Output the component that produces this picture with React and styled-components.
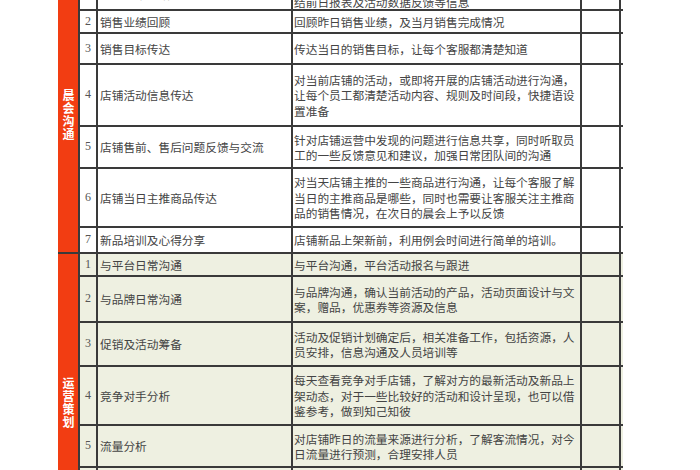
import styled, { createGlobalStyle } from "styled-components";

const GlobalStyle = createGlobalStyle`
  html, body {
    margin: 0;
    padding: 0;
    background: #ffffff;
    overflow: hidden;
  }
`;

const sections = [
  {
    title: "晨会沟通",
    tint: "#ffffff",
    rows: [
      { h: 33, item: "前日数据总结", desc: ["每日晨会由客服主管汇报，总", "结前日报表及活动数据反馈等信息"] },
      { h: 23, item: "销售业绩回顾", desc: ["回顾昨日销售业绩，及当月销售完成情况"] },
      { h: 31, item: "销售目标传达", desc: ["传达当日的销售目标，让每个客服都清楚知道"] },
      {
        h: 62,
        item: "店铺活动信息传达",
        desc: [
          "对当前店铺的活动，或即将开展的店铺活动进行沟通，",
          "让每个员工都清楚活动内容、规则及时间段，快捷语设",
          "置准备",
        ],
      },
      {
        h: 42,
        item: "店铺售前、售后问题反馈与交流",
        desc: [
          "针对店铺运营中发现的问题进行信息共享，同时听取员",
          "工的一些反馈意见和建议，加强日常团队间的沟通",
        ],
      },
      {
        h: 59,
        item: "店铺当日主推商品传达",
        desc: [
          "对当天店铺主推的一些商品进行沟通，让每个客服了解",
          "当日的主推商品是哪些，同时也需要让客服关注主推商",
          "品的销售情况，在次日的晨会上予以反馈",
        ],
      },
      { h: 26, item: "新品培训及心得分享", desc: ["店铺新品上架新前，利用例会时间进行简单的培训。"] },
    ],
  },
  {
    title: "运营策划",
    tint: "#eef0e1",
    rows: [
      { h: 23, item: "与平台日常沟通", desc: ["与平台沟通，平台活动报名与跟进"] },
      {
        h: 46,
        item: "与品牌日常沟通",
        desc: ["与品牌沟通，确认当前活动的产品，活动页面设计与文", "案，赠品，优惠券等资源及信息"],
      },
      {
        h: 44,
        item: "促销及活动筹备",
        desc: ["活动及促销计划确定后，相关准备工作，包括资源，人", "员安排，信息沟通及人员培训等"],
      },
      {
        h: 59,
        item: "竞争对手分析",
        desc: [
          "每天查看竞争对手店铺，了解对方的最新活动及新品上",
          "架动态，对于一些比较好的活动和设计呈现，也可以借",
          "鉴参考，做到知己知彼",
        ],
      },
      {
        h: 42,
        item: "流量分析",
        desc: ["对店铺昨日的流量来源进行分析，了解客流情况，对今", "日流量进行预测，合理安排人员"],
      },
      {
        h: 43,
        item: "数据报表整理",
        desc: ["整理每日店铺运营数据，形成报表，为后续的运营决策", "提供数据支持"],
      },
      { h: 43, item: "活动效果复盘", desc: ["活动结束后对活动效果进行复盘总结"] },
    ],
  },
];

const Page = styled.div`
  padding-left: 58px;
  margin-top: -22px;
  font-family: "Noto Sans CJK SC", "Noto Sans", sans-serif;
`;

const Sheet = styled.div`
  width: 565px;
  display: flex;
  flex-direction: column;
`;

const Section = styled.div`
  display: flex;
  background: ${(p) => p.$tint};
`;

const Category = styled.div`
  width: 22px;
  flex: none;
  box-sizing: border-box;
  background: #f23d12;
  border-right: 2px solid #3a3a3a;
  border-bottom: 2px solid #3a3a3a;
  display: flex;
  align-items: center;
  justify-content: center;
  color: #ffffff;
  font-weight: 700;
  font-size: 12px;
`;

const VerticalLabel = styled.span`
  writing-mode: vertical-rl;
  text-orientation: upright;
  letter-spacing: 1px;
  line-height: 1;
`;

const Rows = styled.div`
  flex: 1;
  display: flex;
  flex-direction: column;
`;

const Row = styled.div`
  display: grid;
  grid-template-columns: 18px 195px 289px 39px;
  box-sizing: border-box;
  border-bottom: 2px solid #3a3a3a;
`;

const Cell = styled.div`
  box-sizing: border-box;
  border-right: 2px solid #3a3a3a;
  display: flex;
  align-items: center;
  color: #444444;
  font-size: 11.7px;
  line-height: 15.5px;
  white-space: nowrap;
  overflow: hidden;
`;

const NumCell = styled(Cell)`
  justify-content: center;
  font-family: "Liberation Serif", serif;
  font-size: 12px;
  color: #555555;
`;

const ItemCell = styled(Cell)`
  padding-left: 2px;
`;

const DescCell = styled(Cell)`
  padding-left: 1px;
`;

const Line = styled.span`
  display: block;
`;

export default function App() {
  return (
    <>
      <GlobalStyle />
      <Page>
        <Sheet>
          {sections.map((section) => (
            <Section key={section.title} $tint={section.tint}>
              <Category>
                <VerticalLabel>{section.title}</VerticalLabel>
              </Category>
              <Rows>
                {section.rows.map((row, i) => (
                  <Row key={row.item} style={{ height: row.h }}>
                    <NumCell>{i + 1}</NumCell>
                    <ItemCell>{row.item}</ItemCell>
                    <DescCell>
                      <div>
                        {row.desc.map((line) => (
                          <Line key={line}>{line}</Line>
                        ))}
                      </div>
                    </DescCell>
                    <Cell />
                  </Row>
                ))}
              </Rows>
            </Section>
          ))}
        </Sheet>
      </Page>
    </>
  );
}
